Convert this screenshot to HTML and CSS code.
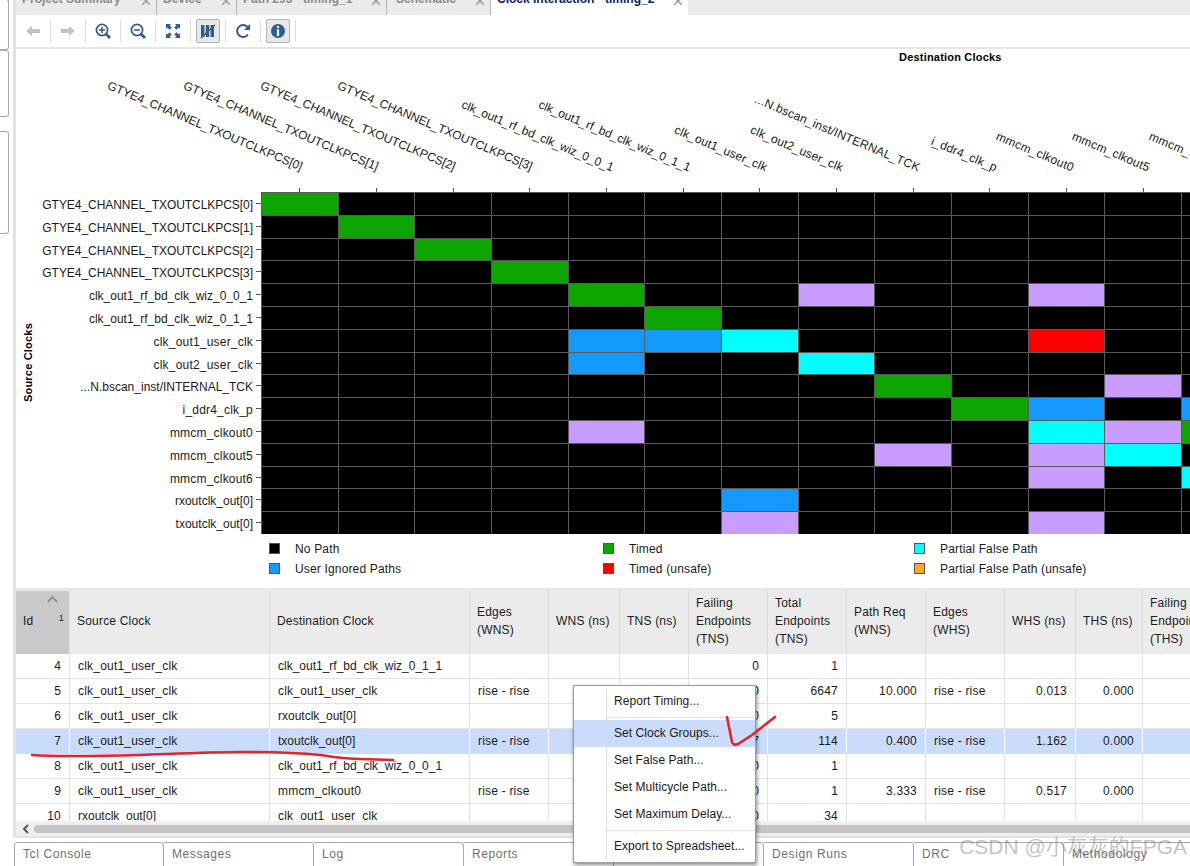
FILE: index.html
```html
<!DOCTYPE html>
<html lang="en">
<head>
    <meta charset="UTF-8">
    <title>Clock Interaction - timing_2</title>
    <link rel="stylesheet" href="styles.css">
</head>
<body>

    <div class="workspace">
        <!-- Collapsed side panels -->
        <div class="side">
            <div class="side-box box-one"></div>
            <div class="side-box box-two"></div>
            <div class="side-box box-three"></div>
        </div>

        <div class="main">
            <!-- Document tabs, cut off by the top of the window -->
            <div class="doc-tabs">
                <div class="doc-tab tab-summary">Project Summary<svg class="close" viewBox="0 0 8 8"><path d="M0 0L8 8M8 0L0 8"/></svg></div>
                <div class="doc-tab tab-device">Device<svg class="close" viewBox="0 0 8 8"><path d="M0 0L8 8M8 0L0 8"/></svg></div>
                <div class="doc-tab tab-path">Path 293 - timing_1<svg class="close" viewBox="0 0 8 8"><path d="M0 0L8 8M8 0L0 8"/></svg></div>
                <div class="doc-tab tab-schematic">Schematic<svg class="close" viewBox="0 0 8 8"><path d="M0 0L8 8M8 0L0 8"/></svg></div>
                <div class="doc-tab tab-clock active">Clock Interaction - timing_2<svg class="close" viewBox="0 0 8 8"><path d="M0 0L8 8M8 0L0 8"/></svg></div>
            </div>

            <!-- Toolbar -->
            <div class="toolbar">
                <div class="tool"><svg class="icon" viewBox="0 0 16 16"><path fill="#c2c2c2" d="M1 8L7 3V6H15V10H7V13Z"/></svg></div>
                <div class="tool"><svg class="icon" viewBox="0 0 16 16"><path fill="#c2c2c2" d="M15 8L9 3V6H1V10H9V13Z"/></svg></div>
                <div class="tool"><svg class="icon" viewBox="0 0 16 16"><g fill="none" stroke="#2b5c99"><circle cx="7" cy="7" r="5.6" stroke-width="1.7"/><path stroke-width="1.5" d="M4 7H10M7 4V10"/><path stroke-width="2.6" d="M11 11L15 15"/></g></svg></div>
                <div class="tool"><svg class="icon" viewBox="0 0 16 16"><g fill="none" stroke="#2b5c99"><circle cx="7" cy="7" r="5.6" stroke-width="1.7"/><path stroke-width="1.5" d="M4 7H10"/><path stroke-width="2.6" d="M11 11L15 15"/></g></svg></div>
                <div class="tool"><svg class="icon" viewBox="0 0 16 16"><path fill="#2b5c99" d="M1 1H6L4.6 2.4L6.8 4.6L4.6 6.8L2.4 4.6L1 6ZM15 1V6L13.6 4.6L11.4 6.8L9.2 4.6L11.4 2.4L10 1ZM1 15V10L2.4 11.4L4.6 9.2L6.8 11.4L4.6 13.6L6 15ZM15 15H10L11.4 13.6L9.2 11.4L11.4 9.2L13.6 11.4L15 10Z"/></svg></div>
                <div class="tool"><span class="toggle"><svg class="icon" viewBox="0 0 16 16"><path fill="#2b5c99" d="M1 2H4.4V14H1ZM5.8 2H9.2V14H5.8ZM10.6 2H14V14H10.6Z"/><path stroke="#5a5a5a" stroke-width="1.7" d="M1 15L15 2"/></svg></span></div>
                <div class="tool"><svg class="icon" viewBox="0 0 16 16"><path fill="none" stroke="#2b5c99" stroke-width="2" d="M13 11.5A6 6 0 1 1 13 4.5"/><path fill="#2b5c99" d="M15 1V7H9Z"/></svg></div>
                <div class="tool"><span class="toggle"><svg class="icon" viewBox="0 0 16 16"><circle cx="8" cy="8" r="7" fill="#2b5c99"/><path fill="#fff" d="M6.9 3H9.1V5H6.9ZM6.9 6.3H9.1V13H6.9Z"/></svg></span></div>
            </div>

            <!-- Clock interaction chart -->
            <div class="chart">
                <div class="chart-title">Destination Clocks</div>
                <div class="col-heads">
                    <div class="col-head"><span class="caps">GTYE4_CHANNEL_TXOUTCLKPCS[0]</span></div>
                    <div class="col-head"><span class="caps">GTYE4_CHANNEL_TXOUTCLKPCS[1]</span></div>
                    <div class="col-head"><span class="caps">GTYE4_CHANNEL_TXOUTCLKPCS[2]</span></div>
                    <div class="col-head"><span class="caps">GTYE4_CHANNEL_TXOUTCLKPCS[3]</span></div>
                    <div class="col-head"><span class="tight">clk_out1_rf_bd_clk_wiz_0_0_1</span></div>
                    <div class="col-head"><span class="tight">clk_out1_rf_bd_clk_wiz_0_1_1</span></div>
                    <div class="col-head"><span>clk_out1_user_clk</span></div>
                    <div class="col-head"><span>clk_out2_user_clk</span></div>
                    <div class="col-head"><span>...N.bscan_inst/INTERNAL_TCK</span></div>
                    <div class="col-head"><span>i_ddr4_clk_p</span></div>
                    <div class="col-head"><span>mmcm_clkout0</span></div>
                    <div class="col-head"><span>mmcm_clkout5</span></div>
                    <div class="col-head"><span>mmcm_clkout6</span></div>
                </div>

                <div class="chart-body">
                    <div class="axis-title"><span>Source Clocks</span></div>
                    <div class="row-heads">
                        <div class="row-head caps">GTYE4_CHANNEL_TXOUTCLKPCS[0]</div>
                        <div class="row-head caps">GTYE4_CHANNEL_TXOUTCLKPCS[1]</div>
                        <div class="row-head caps">GTYE4_CHANNEL_TXOUTCLKPCS[2]</div>
                        <div class="row-head caps">GTYE4_CHANNEL_TXOUTCLKPCS[3]</div>
                        <div class="row-head tight">clk_out1_rf_bd_clk_wiz_0_0_1</div>
                        <div class="row-head tight">clk_out1_rf_bd_clk_wiz_0_1_1</div>
                        <div class="row-head">clk_out1_user_clk</div>
                        <div class="row-head">clk_out2_user_clk</div>
                        <div class="row-head tight">...N.bscan_inst/INTERNAL_TCK</div>
                        <div class="row-head">i_ddr4_clk_p</div>
                        <div class="row-head">mmcm_clkout0</div>
                        <div class="row-head">mmcm_clkout5</div>
                        <div class="row-head">mmcm_clkout6</div>
                        <div class="row-head tight">rxoutclk_out[0]</div>
                        <div class="row-head tight">txoutclk_out[0]</div>
                    </div>

                    <div class="matrix">
                        <i class="green"></i><i></i><i></i><i></i><i></i><i></i><i></i><i></i><i></i><i></i><i></i><i></i><i></i>
                        <i></i><i class="green"></i><i></i><i></i><i></i><i></i><i></i><i></i><i></i><i></i><i></i><i></i><i></i>
                        <i></i><i></i><i class="green"></i><i></i><i></i><i></i><i></i><i></i><i></i><i></i><i></i><i></i><i></i>
                        <i></i><i></i><i></i><i class="green"></i><i></i><i></i><i></i><i></i><i></i><i></i><i></i><i></i><i></i>
                        <i></i><i></i><i></i><i></i><i class="green"></i><i></i><i></i><i class="purple"></i><i></i><i></i><i class="purple"></i><i></i><i></i>
                        <i></i><i></i><i></i><i></i><i></i><i class="green"></i><i></i><i></i><i></i><i></i><i></i><i></i><i></i>
                        <i></i><i></i><i></i><i></i><i class="blue"></i><i class="blue"></i><i class="cyan"></i><i></i><i></i><i></i><i class="red"></i><i></i><i></i>
                        <i></i><i></i><i></i><i></i><i class="blue"></i><i></i><i></i><i class="cyan"></i><i></i><i></i><i></i><i></i><i></i>
                        <i></i><i></i><i></i><i></i><i></i><i></i><i></i><i></i><i class="green"></i><i></i><i></i><i class="purple"></i><i></i>
                        <i></i><i></i><i></i><i></i><i></i><i></i><i></i><i></i><i></i><i class="green"></i><i class="blue"></i><i></i><i class="blue"></i>
                        <i></i><i></i><i></i><i></i><i class="purple"></i><i></i><i></i><i></i><i></i><i></i><i class="cyan"></i><i class="purple"></i><i class="green"></i>
                        <i></i><i></i><i></i><i></i><i></i><i></i><i></i><i></i><i class="purple"></i><i></i><i class="purple"></i><i class="cyan"></i><i></i>
                        <i></i><i></i><i></i><i></i><i></i><i></i><i></i><i></i><i></i><i></i><i class="purple"></i><i></i><i class="cyan"></i>
                        <i></i><i></i><i></i><i></i><i></i><i></i><i class="blue"></i><i></i><i></i><i></i><i></i><i></i><i></i>
                        <i></i><i></i><i></i><i></i><i></i><i></i><i class="purple"></i><i></i><i></i><i></i><i class="purple"></i><i></i><i></i>
                    </div>
                </div>

                <div class="legend">
                    <div class="legend-item"><b class="swatch black"></b>No Path</div>
                    <div class="legend-item"><b class="swatch green"></b>Timed</div>
                    <div class="legend-item"><b class="swatch cyan"></b>Partial False Path</div>
                    <div class="legend-item"><b class="swatch blue"></b>User Ignored Paths</div>
                    <div class="legend-item"><b class="swatch red"></b>Timed (unsafe)</div>
                    <div class="legend-item"><b class="swatch orange"></b>Partial False Path (unsafe)</div>
                </div>
            </div>

            <!-- Results table -->
            <div class="table-wrap">
                <table class="results">
                    <colgroup>
                        <col class="w54"><col class="w200"><col class="w200"><col class="w79"><col class="w71"><col class="w69"><col class="w79"><col class="w79"><col class="w79"><col class="w79"><col class="w71"><col class="w67"><col class="w79">
                    </colgroup>
                    <thead>
                        <tr>
                            <th class="sorted"><svg class="sort-arrow" viewBox="0 0 12 7"><path d="M1 6L6 1L11 6"/></svg>Id<sup>1</sup></th>
                            <th>Source Clock</th>
                            <th>Destination Clock</th>
                            <th>Edges<br>(WNS)</th>
                            <th>WNS (ns)</th>
                            <th>TNS (ns)</th>
                            <th>Failing<br>Endpoints<br>(TNS)</th>
                            <th>Total<br>Endpoints<br>(TNS)</th>
                            <th>Path Req<br>(WNS)</th>
                            <th>Edges<br>(WHS)</th>
                            <th>WHS (ns)</th>
                            <th>THS (ns)</th>
                            <th>Failing<br>Endpoints<br>(THS)</th>
                        </tr>
                    </thead>
                    <tbody>
                        <tr><td class="num">4</td><td>clk_out1_user_clk</td><td class="tight">clk_out1_rf_bd_clk_wiz_0_1_1</td><td></td><td></td><td></td><td class="num">0</td><td class="num">1</td><td></td><td></td><td></td><td></td><td></td></tr>
                        <tr><td class="num">5</td><td>clk_out1_user_clk</td><td>clk_out1_user_clk</td><td>rise - rise</td><td></td><td></td><td class="num">0</td><td class="num">6647</td><td class="num">10.000</td><td>rise - rise</td><td class="num">0.013</td><td class="num">0.000</td><td></td></tr>
                        <tr><td class="num">6</td><td>clk_out1_user_clk</td><td class="tight">rxoutclk_out[0]</td><td></td><td></td><td></td><td class="num">0</td><td class="num">5</td><td></td><td></td><td></td><td></td><td></td></tr>
                        <tr class="selected"><td class="num">7</td><td>clk_out1_user_clk</td><td class="tight">txoutclk_out[0]</td><td>rise - rise</td><td></td><td></td><td class="num">7</td><td class="num">114</td><td class="num">0.400</td><td>rise - rise</td><td class="num">1.162</td><td class="num">0.000</td><td></td></tr>
                        <tr><td class="num">8</td><td>clk_out1_user_clk</td><td class="tight">clk_out1_rf_bd_clk_wiz_0_0_1</td><td></td><td></td><td></td><td class="num">0</td><td class="num">1</td><td></td><td></td><td></td><td></td><td></td></tr>
                        <tr><td class="num">9</td><td>clk_out1_user_clk</td><td>mmcm_clkout0</td><td>rise - rise</td><td></td><td></td><td class="num">0</td><td class="num">1</td><td class="num">3.333</td><td>rise - rise</td><td class="num">0.517</td><td class="num">0.000</td><td></td></tr>
                        <tr><td class="num">10</td><td class="tight">rxoutclk_out[0]</td><td>clk_out1_user_clk</td><td></td><td></td><td></td><td class="num">0</td><td class="num">34</td><td></td><td></td><td></td><td></td><td></td></tr>
                    </tbody>
                </table>
            </div>

            <!-- Horizontal scrollbar -->
            <div class="scrollbar">
                <svg class="scroll-arrow" viewBox="0 0 7 10"><path d="M6 1L2 5L6 9"/></svg>
                <div class="scroll-thumb"></div>
            </div>
        </div>
    </div>

    <!-- Bottom tool tabs -->
    <div class="tool-tabs">
        <div class="tool-tab">Tcl Console</div>
        <div class="tool-tab">Messages</div>
        <div class="tool-tab">Log</div>
        <div class="tool-tab">Reports</div>
        <div class="tool-tab"></div>
        <div class="tool-tab">Design Runs</div>
        <div class="tool-tab">DRC</div>
        <div class="tool-tab">Methodology</div>
    </div>

    <!-- Right click menu -->
    <div class="context-menu">
        <div class="menu-item">Report Timing...</div>
        <div class="menu-sep"></div>
        <div class="menu-item hover">Set Clock Groups...</div>
        <div class="menu-item">Set False Path...</div>
        <div class="menu-item">Set Multicycle Path...</div>
        <div class="menu-item">Set Maximum Delay...</div>
        <div class="menu-sep"></div>
        <div class="menu-item">Export to Spreadsheet...</div>
    </div>

    <!-- Red pen marks drawn over the screenshot -->
    <svg class="marks" viewBox="0 0 1190 866">
        <path d="M32 755C60 757 100 756 140 755C170 754 210 752 240 752C270 752 300 753 320 755C335 757 345 759 360 759L393 760"/>
        <path d="M727 717L732 742Q733 746 738 744L752 735L775 717"/>
    </svg>

    <div class="watermark">CSDN @小灰灰的FPGA</div>

</body>
</html>
```

FILE: styles.css
```css
* {
    box-sizing: border-box;
}

html, body {
    margin: 0;
    height: 866px;
    overflow: hidden;
}

body {
    position: relative;
    font-family: 'Liberation Sans', Arial, sans-serif;
    font-size: 12px;
    letter-spacing: 0.2px;
    color: #1a1a1a;
    background-color: white;
}

.workspace {
    display: flex;
    height: 838px;
}

/* Collapsed side panels */
.side {
    width: 13px;
    flex-shrink: 0;
}

.side-box {
    width: 9px;
    border: 1px solid #a8a8a8;
    border-left: none;
    border-radius: 0 3px 3px 0;
}

.box-one {
    height: 51px;
    margin-top: -1px;
}

.box-two {
    height: 67px;
}

.box-three {
    height: 103px;
    margin-top: 14px;
}

.main {
    flex: 1;
    min-width: 0;
    display: flex;
    flex-direction: column;
    border-left: 3px solid #e2e2e2;
    border-bottom: 2px solid #e2e2e2;
}

/* Document tabs */
.doc-tabs {
    height: 15px;
    flex-shrink: 0;
    display: flex;
    align-items: flex-end;
    overflow: hidden;
    background-color: #ebebeb;
}

.doc-tab {
    height: 30px;
    line-height: 28px;
    flex-shrink: 0;
    display: flex;
    justify-content: space-between;
    padding: 0 5px 0 6px;
    font-weight: bold;
    letter-spacing: 0;
    color: #8a8a8a;
    border-right: 1px solid #b8b8b8;
}

.tab-summary { width: 141px; }
.tab-device { width: 80px; }
.tab-path { width: 150px; }
.tab-schematic { width: 104px; padding-left: 9px; }
.tab-clock { width: 197px; }

.doc-tab.active {
    color: #0b1a66;
    background-color: white;
    border-right: none;
}

.close {
    width: 8px;
    height: 8px;
    margin-top: 12px;
    margin-right: 1px;
    fill: none;
    stroke: #9c9c9c;
    stroke-width: 1.5;
}

/* Toolbar */
.toolbar {
    height: 34px;
    flex-shrink: 0;
    display: flex;
    align-items: center;
    border-bottom: 2px solid #e6e6e6;
}

.tool {
    width: 35px;
    height: 22px;
    display: flex;
    align-items: center;
    justify-content: center;
    padding-right: 1px;
    border-right: 1px solid #dcdcdc;
}

.icon {
    width: 16px;
    height: 16px;
}

.toggle {
    width: 24px;
    height: 24px;
    display: flex;
    align-items: center;
    justify-content: center;
    background-color: #e8e8e8;
    border: 1px solid #b4b4b4;
    border-radius: 2px;
}

/* Chart */
.chart {
    height: 542px;
    flex-shrink: 0;
    overflow: hidden;
    border-bottom: 3px solid #e8e8e8;
}

.chart-title {
    height: 15px;
    padding: 2px 0 0 883px;
    font-size: 11px;
    font-weight: bold;
    letter-spacing: 0.2px;
    line-height: 13px;
    color: black;
}

.col-heads {
    height: 128px;
    margin-left: 245px;
    display: grid;
    grid-template-columns: repeat(13, 76.67px);
}

.col-head {
    position: relative;
}

.col-head::after {
    content: '';
    position: absolute;
    left: 50%;
    bottom: 0;
    height: 4px;
    border-left: 1px solid #555;
}

.col-head span {
    position: absolute;
    right: calc(50% - 7px);
    bottom: 17px;
    line-height: 13px;
    white-space: nowrap;
    transform-origin: 100% 50%;
    transform: rotate(23deg);
}

.col-head span.caps {
    right: calc(50% - 2px);
    bottom: 18px;
}

.caps {
    letter-spacing: -0.05px;
}

.tight {
    letter-spacing: 0;
}

.chart-body {
    display: flex;
    align-items: stretch;
}

.axis-title {
    width: 24px;
    flex-shrink: 0;
    display: flex;
    align-items: center;
    justify-content: center;
}

.axis-title span {
    writing-mode: vertical-rl;
    transform: rotate(180deg);
    font-size: 11px;
    font-weight: bold;
    letter-spacing: 0.2px;
    color: black;
}

.row-heads {
    width: 221px;
    flex-shrink: 0;
    display: grid;
    grid-template-rows: repeat(15, 22.8px);
}

.row-head {
    position: relative;
    padding-right: 8px;
    text-align: right;
    line-height: 26px;
    white-space: nowrap;
}

.row-head::after {
    content: '';
    position: absolute;
    right: 0;
    top: 11px;
    width: 5px;
    border-top: 1px solid #555;
}

.matrix {
    display: grid;
    grid-template-columns: repeat(13, 76.67px);
    grid-template-rows: repeat(15, 22.8px);
    flex-shrink: 0;
}

.matrix i {
    background-color: black;
    border-left: 1px solid #5a5a5a;
    border-top: 1px solid #5a5a5a;
}

.matrix i.green, .swatch.green { background-color: #0da600; }
.matrix i.blue, .swatch.blue { background-color: #1499ff; }
.matrix i.cyan, .swatch.cyan { background-color: #00ffff; }
.matrix i.red, .swatch.red { background-color: #fa0000; }
.matrix i.purple { background-color: #c99cff; }
.swatch.black { background-color: black; }
.swatch.orange { background-color: #ffa726; }

.legend {
    margin: 5px 0 0 253px;
    display: grid;
    grid-template-columns: 334px 311px 1fr;
    grid-auto-rows: 20px;
}

.legend-item {
    display: flex;
    align-items: center;
    line-height: 14px;
    letter-spacing: 0.16px;
    white-space: nowrap;
}

.swatch {
    width: 11px;
    height: 11px;
    margin-right: 15px;
    border: 1px solid #555;
}

/* Results table */
.table-wrap {
    height: 230px;
    flex-shrink: 0;
    overflow: hidden;
}

.results {
    table-layout: fixed;
    width: 1206px;
    border-collapse: separate;
    border-spacing: 0;
}

.w54 { width: 54px; }
.w200 { width: 200px; }
.w79 { width: 79px; }
.w71 { width: 71px; }
.w69 { width: 69px; }
.w67 { width: 67px; }

.results th {
    position: relative;
    height: 63px;
    padding: 0 7px 3px;
    font-weight: normal;
    text-align: left;
    line-height: 18px;
    white-space: nowrap;
    background-color: #ebebeb;
    border-right: 1px solid #dcdcdc;
}

.results th.sorted {
    background-color: #c9c9c9;
}

.sort-arrow {
    position: absolute;
    right: 11px;
    top: 5px;
    width: 11px;
    height: 7px;
    fill: none;
    stroke: #8c8c8c;
    stroke-width: 2;
}

.results sup {
    position: absolute;
    right: 5px;
    top: 21px;
    font-size: 9px;
    line-height: 12px;
}

.results td {
    height: 25px;
    padding: 0 8px;
    white-space: nowrap;
    border-right: 1px solid #e2e2e2;
    border-bottom: 1px solid #e2e2e2;
}

.results td.num {
    text-align: right;
}

.selected td {
    background-color: #c9dcfb;
    border-right-color: white;
    border-bottom-color: #c9dcfb;
}

/* Scrollbar */
.scrollbar {
    height: 15px;
    display: flex;
    align-items: center;
    padding-left: 6px;
    background-color: #efefef;
}

.scroll-arrow {
    width: 7px;
    height: 10px;
    fill: none;
    stroke: #555;
    stroke-width: 2;
}

.scroll-thumb {
    flex: 1;
    height: 8px;
    margin-left: 5px;
    background-color: #c4c4c4;
    border-radius: 4px 0 0 4px;
}

/* Bottom tabs */
.tool-tabs {
    display: flex;
    height: 24px;
    margin: 4px 0 0 14px;
}

.tool-tab {
    width: 150px;
    flex-shrink: 0;
    padding-left: 8px;
    line-height: 23px;
    letter-spacing: 0.6px;
    color: #707070;
    border: 1px solid #a8a8a8;
    border-bottom: none;
    border-left: none;
    border-radius: 0 4px 0 0;
}

.tool-tab:first-child {
    border-left: 1px solid #a8a8a8;
    border-radius: 4px 4px 0 0;
}

/* Context menu */
.context-menu {
    position: absolute;
    left: 573px;
    top: 685px;
    width: 183px;
    height: 178px;
    padding-top: 2px;
    letter-spacing: 0.05px;
    background-color: white;
    border: 1px solid #9a9a9a;
    box-shadow: 1px 2px 4px rgba(0, 0, 0, 0.45);
}

.context-menu::before {
    content: '';
    position: absolute;
    left: 32px;
    top: 2px;
    bottom: 2px;
    border-left: 1px solid #dddddd;
}

.menu-item {
    position: relative;
    height: 27px;
    padding-left: 40px;
    line-height: 27px;
    white-space: nowrap;
}

.menu-item.hover {
    background-color: #c9dcfb;
}

.menu-sep {
    height: 5px;
    margin: 0 0 0 33px;
    background: linear-gradient(#e0e0e0, #e0e0e0) no-repeat 0 2px / 100% 1px;
}

/* Pen marks */
.marks {
    position: absolute;
    left: 0;
    top: 0;
    width: 1190px;
    height: 866px;
    fill: none;
    stroke: #e6212b;
    stroke-width: 2.6;
    stroke-linecap: round;
    pointer-events: none;
}

.watermark {
    position: absolute;
    right: 3px;
    top: 834px;
    font-family: 'Liberation Sans', 'Noto Sans CJK SC', sans-serif;
    font-size: 21px;
    letter-spacing: 0;
    line-height: 26px;
    white-space: nowrap;
    color: rgba(110, 110, 110, 0.42);
}
```
